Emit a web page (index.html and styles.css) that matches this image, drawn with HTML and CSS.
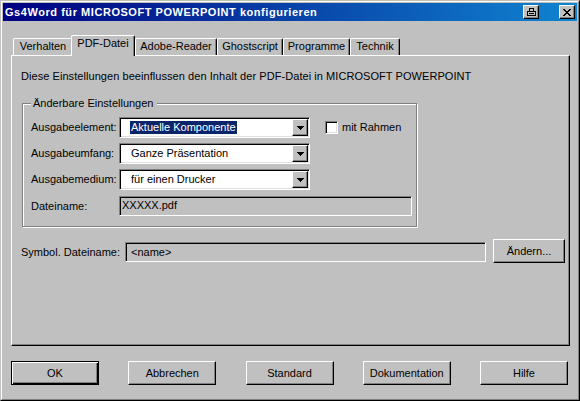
FILE: index.html
```html
<!DOCTYPE html>
<html>
<head>
<meta charset="utf-8">
<link rel="stylesheet" href="styles.css">
</head>
<body>
<div class="window">
  <div class="frame">
    <div class="titlebar">
      <span class="title">Gs4Word für MICROSOFT POWERPOINT konfigurieren</span>
      <span class="capbtn print"><svg width="9" height="8" viewBox="0 0 9 8" shape-rendering="crispEdges"><path d="M2 0h5v1h-5zM2 0h1v3h-1zM6 0h1v3h-1zM0 3h9v1h-9zM0 3h1v5h-1zM8 3h1v5h-1zM0 7h9v1h-9zM2 5h5v1h-5z" fill="#000"/></svg></span>
      <span class="capbtn close"><svg width="8" height="7" viewBox="0 0 8 7" shape-rendering="crispEdges"><path d="M0 0h2v1h-2zM6 0h2v1h-2zM1 1h2v1h-2zM5 1h2v1h-2zM2 2h4v1h-4zM3 3h2v1h-2zM2 4h4v1h-4zM1 5h2v1h-2zM5 5h2v1h-2zM0 6h2v1h-2zM6 6h2v1h-2z" fill="#000"/></svg></span>
    </div>
    <div class="client">
      <div class="tabs">
        <div class="tab t-verhalten">Verhalten</div>
        <div class="tab active">PDF-Datei</div>
        <div class="tab t-adobe">Adobe-Reader</div>
        <div class="tab t-ghost">Ghostscript</div>
        <div class="tab t-prog">Programme</div>
        <div class="tab t-tech">Technik</div>
      </div>
      <div class="panel">
        <div class="intro">Diese Einstellungen beeinflussen den Inhalt der PDF-Datei in MICROSOFT POWERPOINT</div>
        <div class="group">
          <div class="legend">Änderbare Einstellungen</div>
          <div class="rows">
            <div class="row">
              <span class="lbl">Ausgabeelement:</span>
              <div class="combo"><span class="val"><span class="sel">Aktuelle Komponente</span></span><span class="arrow"><svg width="7" height="4" viewBox="0 0 7 4" shape-rendering="crispEdges"><path d="M0 0h7v1h-7zM1 1h5v1h-5zM2 2h3v1h-3zM3 3h1v1h-1z" fill="#000"/></svg></span></div>
              <span class="check"></span>
              <span class="checklbl">mit Rahmen</span>
            </div>
            <div class="row">
              <span class="lbl">Ausgabeumfang:</span>
              <div class="combo"><span class="val"><span class="plain">Ganze Präsentation</span></span><span class="arrow"><svg width="7" height="4" viewBox="0 0 7 4" shape-rendering="crispEdges"><path d="M0 0h7v1h-7zM1 1h5v1h-5zM2 2h3v1h-3zM3 3h1v1h-1z" fill="#000"/></svg></span></div>
            </div>
            <div class="row">
              <span class="lbl">Ausgabemedium:</span>
              <div class="combo"><span class="val"><span class="plain">für einen Drucker</span></span><span class="arrow"><svg width="7" height="4" viewBox="0 0 7 4" shape-rendering="crispEdges"><path d="M0 0h7v1h-7zM1 1h5v1h-5zM2 2h3v1h-3zM3 3h1v1h-1z" fill="#000"/></svg></span></div>
            </div>
            <div class="row row-file">
              <span class="lbl">Dateiname:</span>
              <div class="field readonly">XXXXX.pdf</div>
            </div>
          </div>
        </div>
        <div class="symrow">
          <span class="symlbl">Symbol. Dateiname:</span>
          <div class="field symfield">&lt;name&gt;</div>
          <span class="btn small">Ändern...</span>
        </div>
      </div>
      <div class="buttons">
        <span class="btn default">OK</span>
        <span class="btn">Abbrechen</span>
        <span class="btn">Standard</span>
        <span class="btn">Dokumentation</span>
        <span class="btn">Hilfe</span>
      </div>
    </div>
  </div>
</div>
</body>
</html>
```
FILE: styles.css
```css
* { box-sizing: border-box; }
html, body { margin: 0; padding: 0; }
body {
  width: 580px;
  height: 401px;
  overflow: hidden;
  background: #c0c0c0;
  font-family: "Liberation Sans", Arial, sans-serif;
  font-size: 11px;
  line-height: 13px;
  color: #000;
}
.window {
  width: 580px;
  height: 401px;
  background: #c0c0c0;
  border: 1px solid;
  border-color: #c0c0c0 #000 #000 #c0c0c0;
}
.frame {
  height: 100%;
  border: 1px solid;
  border-color: #fff #808080 #808080 #fff;
  padding: 1px;
  display: flex;
  flex-direction: column;
}
.titlebar {
  height: 18px;
  flex: none;
  display: flex;
  align-items: center;
  padding: 0 2px;
  background: linear-gradient(to right, #000080, #1084d0);
  color: #fff;
  font-weight: bold;
}
.title { flex: 1; white-space: nowrap; letter-spacing: 0.55px; }
.capbtn {
  width: 16px;
  height: 14px;
  display: flex;
  align-items: center;
  justify-content: center;
  background: #c0c0c0;
  border: 1px solid;
  border-color: #fff #000 #000 #fff;
  box-shadow: inset -1px -1px 0 #808080;
}
.capbtn.print { margin-right: 20px; }
.capbtn svg { display: block; }
.client {
  flex: 1;
  padding: 14px 7px 0 8px;
}
.tabs {
  height: 20px;
  display: flex;
  align-items: flex-end;
  padding-left: 2px;
}
.tab {
  height: 17px;
  padding-top: 1px;
  text-align: center;
  white-space: nowrap;
  background: #c0c0c0;
  border-top: 1px solid #fff;
  border-left: 1px solid #fff;
  border-right: 1px solid #000;
  border-radius: 2px 2px 0 0;
  box-shadow: inset -1px 0 0 #808080;
}
.t-verhalten { width: 60px; }
.t-adobe { width: 82px; }
.t-ghost { width: 66px; }
.t-prog { width: 67px; }
.t-tech { width: 50px; }
.tab.active {
  width: 64px;
  height: 21px;
  margin-left: -2px;
  margin-bottom: -1px;
  padding-top: 1px;
  position: relative;
  z-index: 1;
}
.panel {
  height: 291px;
  border: 1px solid;
  border-color: #fff #000 #000 #fff;
  box-shadow: inset -1px -1px 0 #808080;
  padding: 14px 0 0 9px;
}
.intro { white-space: nowrap; letter-spacing: 0.06px; }
.group {
  margin: 20px 0 0 1px;
  width: 395px;
  border: 1px solid #808080;
  box-shadow: inset 1px 1px 0 #fff, 1px 1px 0 #fff;
  padding-bottom: 10px;
}
.legend {
  width: fit-content;
  margin: -7px 0 0 8px;
  padding: 0 4px 0 2px;
  background: #c0c0c0;
  white-space: nowrap;
}
.rows {
  padding: 7px 0 0 8px;
  display: flex;
  flex-direction: column;
  gap: 5px;
}
.row {
  display: flex;
  align-items: center;
  height: 21px;
}
.row-file { margin-top: 1px; height: 20px; }
.lbl { width: 88px; white-space: nowrap; }
.combo {
  width: 191px;
  height: 21px;
  display: flex;
  align-items: center;
  background: #fff;
  border: 1px solid;
  border-color: #808080 #fff #fff #808080;
  box-shadow: inset 1px 1px 0 #000, inset -1px -1px 0 #dfdfdf;
  padding: 1px;
}
.val {
  flex: 1;
  padding-left: 9px;
  white-space: nowrap;
}
.sel {
  display: inline-block;
  background: #0a246a;
  color: #fff;
  padding: 0 1px;
}
.plain { display: inline-block; padding: 0 1px; }
.arrow {
  width: 16px;
  height: 17px;
  display: flex;
  align-items: center;
  justify-content: center;
  background: #c0c0c0;
  border: 1px solid;
  border-color: #fff #000 #000 #fff;
  box-shadow: inset -1px -1px 0 #808080;
}
.arrow svg { display: block; }
.check {
  width: 13px;
  height: 13px;
  margin-left: 15px;
  background: #fff;
  border: 1px solid;
  border-color: #808080 #fff #fff #808080;
  box-shadow: inset 1px 1px 0 #000, inset -1px -1px 0 #dfdfdf;
}
.checklbl { margin-left: 4px; white-space: nowrap; }
.field {
  border: 1px solid;
  border-color: #808080 #fff #fff #808080;
  box-shadow: inset 1px 1px 0 #000, inset -1px -1px 0 #c0c0c0;
  white-space: nowrap;
}
.readonly {
  width: 293px;
  height: 20px;
  padding: 3px 0 0 2px;
  line-height: 11px;
}
.symrow {
  display: flex;
  align-items: flex-start;
  margin-top: 12px;
}
.symlbl {
  width: 104px;
  padding-top: 7px;
  white-space: nowrap;
}
.symfield {
  width: 361px;
  height: 20px;
  margin-top: 3px;
  padding: 2px 0 0 5px;
  line-height: 14px;
}
.btn {
  width: 88px;
  height: 24px;
  display: flex;
  align-items: center;
  justify-content: center;
  padding-top: 1px;
  background: #c0c0c0;
  border: 1px solid;
  border-color: #fff #000 #000 #fff;
  box-shadow: inset -1px -1px 0 #808080;
  white-space: nowrap;
}
.btn.small { width: 72px; margin-left: 7px; }
.btn.default {
  border-color: #000;
  box-shadow: inset 1px 1px 0 #fff, inset -1px -1px 0 #000, inset -2px -2px 0 #808080;
}
.buttons {
  width: 557px;
  margin-top: 15px;
  display: flex;
  justify-content: space-between;
}
```
